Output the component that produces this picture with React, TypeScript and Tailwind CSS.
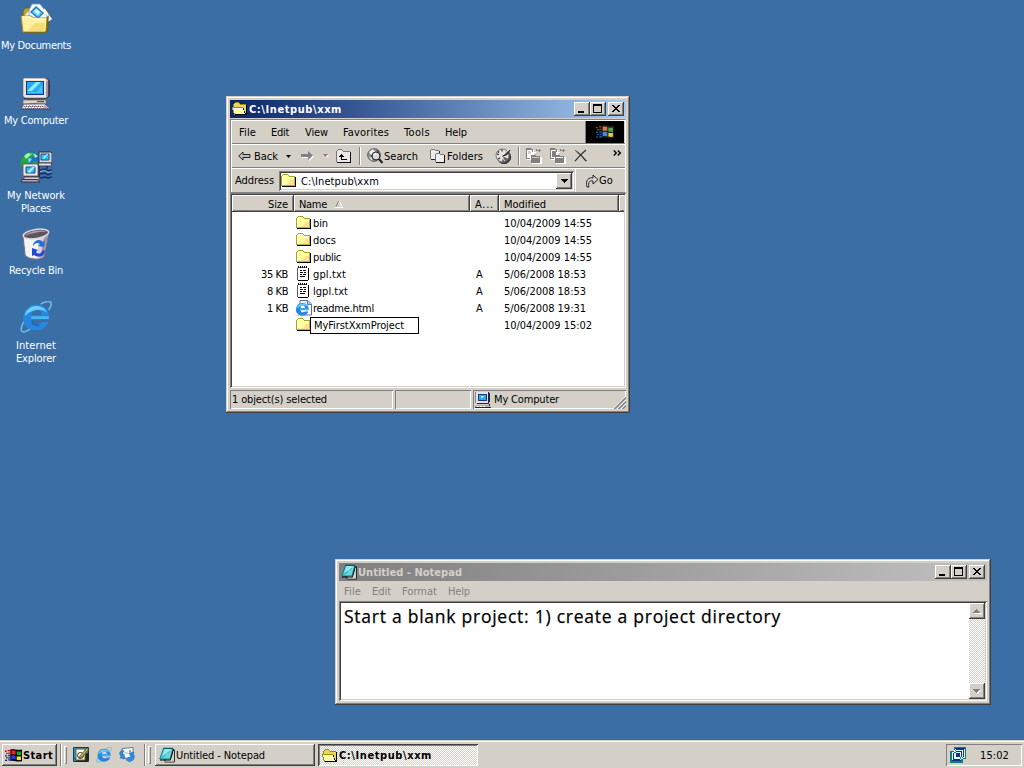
import { useLayoutEffect, useRef, useState } from "react";
import type { ReactNode } from "react";

const RAISED = "bg-[#d4d0c8] shadow-[inset_-1px_-1px_0_#404040,inset_1px_1px_0_#fff,inset_-2px_-2px_0_#808080]";
const SUNKEN = "shadow-[inset_1px_1px_0_#808080,inset_-1px_-1px_0_#fff,inset_2px_2px_0_#404040,inset_-2px_-2px_0_#d4d0c8]";
const THIN_SUNKEN = "shadow-[inset_1px_1px_0_#808080,inset_-1px_-1px_0_#fff]";
const FRAME =
  "bg-[#d4d0c8] shadow-[inset_-1px_-1px_0_#404040,inset_1px_1px_0_#d4d0c8,inset_-2px_-2px_0_#808080,inset_2px_2px_0_#fff]";
const DITHER = "bg-[repeating-conic-gradient(#d4d0c8_0_25%,#fff_0_50%)] bg-[length:2px_2px]";

/* Text whose letter spacing is adjusted so the line is exactly w pixels wide. */
function Fit({ w, children, className = "" }: { w: number; children: string; className?: string }) {
  const ref = useRef<HTMLSpanElement>(null);
  const [gap, setGap] = useState(0);
  useLayoutEffect(() => {
    if (ref.current) setGap((w - ref.current.getBoundingClientRect().width) / children.length);
  }, []);
  return (
    <span ref={ref} className={`inline-block shrink-0 whitespace-pre ${className}`} style={{ letterSpacing: gap }}>
      {children}
    </span>
  );
}

function Folder({ s = 16 }: { s?: number }) {
  return (
    <svg width={s} height={s} viewBox="0 0 16 16" className="shrink-0" shapeRendering="crispEdges">
      <path d="M1 3h1V2h5v1h1v1h6v9H1z" fill="#ffff9c" />
      <path d="M9 7h4v5H5v-1h2v-1h1V9h1z" fill="#ffdf94" />
      <path d="M0 3h1v10H0zM1 2h1v1H1zM2 1h5v1H2zM7 2h1v1H7zM8 3h6v1H8z" fill="#a5a229" />
      <path d="M1 4h1v8H1zM2 2h5v1H2zM7 4h6v1H7z" fill="#fff" />
      <path d="M14 4h1v10h-1zM1 13h14v1H1z" fill="#000" />
      <path d="M13 4h1v9h-1zM1 12h12v1H1z" fill="#b5b242" />
    </svg>
  );
}

function OpenFolder() {
  return (
    <svg width="16" height="16" viewBox="0 0 16 16" className="shrink-0" shapeRendering="crispEdges">
      <path d="M2 3h1V2h4v1h1v1h6v10H4V8H2z" fill="#e7d760" />
      <path d="M2 2h1V1h4v1h1v1h6v1H8V3H7V2H3v1H2v3H1V3h1z" fill="#949200" />
      <path d="M0 6h11v2h1v3h1v2h1v1H3v-2H2v-2H1V8H0z" fill="#ffffa5" />
      <path d="M1 7h9v1H2v2h1v2H2V9H1z" fill="#fff" />
      <path d="M0 6h11v1H0zM0 7h1v2H0zM1 9h1v3H1zM2 12h1v2H2z" fill="#949200" />
      <path d="M3 14h12V4h-1v8h-1v-2h-1V7h-1v2h1v3h1v1H3z" fill="#000" />
    </svg>
  );
}

function TxtFile() {
  return (
    <svg width="16" height="16" viewBox="0 0 16 16" className="shrink-0" shapeRendering="crispEdges">
      <path d="M2 2h10v12H2z" fill="#fff" />
      <path d="M1 2h1v12H1zM2 1h9v1H2z" fill="#606060" />
      <path d="M12 2h1v12h-1zM2 14h10v1H2zM2 0h1v2H2zM4 0h1v2H4zM6 0h1v2H6zM8 0h1v2H8zM10 0h1v2h-1zM4 4h2v1H4zM7 4h3v1H7zM4 6h3v1H4zM8 6h2v1H8zM4 8h2v1H4zM7 8h3v1H7zM4 10h5v1H4z" fill="#000" />
    </svg>
  );
}

function IELogo({ size, page = false }: { size: number; page?: boolean }) {
  return (
    <svg width={size} height={size} viewBox={page ? "0 0 32 32" : "1 1.5 31 31"} className="shrink-0">
      {page && <path d="M8 1h16l7 7v22H8z" fill="#fff" stroke="#5a6ea5" strokeWidth="2" />}
      {page && <path d="M23 1v8h8" fill="#bdd0f0" stroke="#5a6ea5" strokeWidth="2" />}
      <g transform={page ? "translate(-4 1)" : undefined}>
        <path d="M21 4.500C26 1.500 30 1 31 3.200c.9 1.900-.6 4.600-2.300 7.200M6.500 19C2 25 1.400 30 3.100 31c2 .9 6-.8 9-3.400" fill="none" stroke="#68b7e9" strokeWidth="1.600" />
        <path d="M29.400 19.400H12.200c.2 3.100 2.100 4.900 4.800 4.900 2.200 0 3.700-.8 4.800-2.400h7c-1.800 4.900-6.300 8-12.200 8C9 29.900 4 25.500 4 18.200 4 10.600 9.500 5 16.700 5c7.800 0 13.300 5.800 12.700 14.400zM22.300 15c-.3-3.200-2.200-4.900-5.100-4.900-2.700 0-4.700 1.700-5.100 4.900z" fill="#2687df" />
        <path d="M5.500 16.500C6.200 10.500 11 6.400 16.600 6.300c5 0 9 2.300 10.600 6.500-5.200-4.500-15-3.700-21.700 3.700z" fill="#6ed0fa" />
        <path d="M12.500 21c.7 3 3.600 4.700 7 3.700" fill="none" stroke="#1863b8" strokeWidth="1.500" />
        <path d="M12 16.200h16.800c.2 1.200.1 2-.1 2.700H12z" fill="#49b3f3" />
      </g>
    </svg>
  );
}

function Computer() {
  return (
    <svg width="32" height="32" viewBox="0 0 32 32" className="shrink-0">
      <path d="M4 0h23l3 3v15l-4 3H4z" fill="#39334f" />
      <path d="M3 1l1-1h21l3 2v16l-2 2H5l-2-2z" fill="#e7e3de" stroke="#6a6478" strokeWidth=".6" />
      <path d="M4 1.500h21" stroke="#fff" />
      <path d="M26 2.500l2 1V18l-2 1z" fill="#9b94a8" />
      <path d="M6 3h18v14H6z" fill="#17378c" />
      <path d="M7 4h16v12H7z" fill="#29a8ee" />
      <path d="M8 12l8-8h5l-9 9H8z" fill="#82effb" />
      <path d="M8 14h9l5-7v8H8z" fill="#41c6f7" />
      <path d="M8 20h16v2H8z" fill="#4f4858" />
      <path d="M3 22h23v5H3z" fill="#ddd7cd" stroke="#625b5c" strokeWidth=".7" />
      <path d="M17 23.500h7" stroke="#505070" />
      <path d="M3 26l21-1 7 6H1z" fill="#b6aebe" stroke="#41394c" strokeWidth=".7" />
      <path d="M4 27.500h20M3 29.500h21" stroke="#fff" strokeDasharray="2 1" />
      <path d="M4 28.500h20M3 30.500h27" stroke="#645c6d" strokeDasharray="1 1" />
    </svg>
  );
}

function SmallComputer() {
  return (
    <svg width="16" height="16" viewBox="0 0 16 16" className="shrink-0" shapeRendering="crispEdges">
      <path d="M1 0h12v11H1z" fill="#e7e3de" />
      <path d="M0 0h1v11H0z" fill="#8c8494" />
      <path d="M13 0h1v1h1v9h-1v1h-1zM2 11h12v1H2z" fill="#29233c" />
      <path d="M3 2h9v7H3z" fill="#17378c" />
      <path d="M4 3h7v5H4z" fill="#29a8ee" />
      <path d="M6 4h3v1H8v1H6z" fill="#adf5ff" />
      <path d="M2 12h12v2H2z" fill="#d0cabf" />
      <path d="M1 13h13v1h1v1H0v-1h1z" fill="#b6aebe" />
      <path d="M0 15h16v1H0zM14 12h1v2h-1z" fill="#29233c" />
      <path d="M2 14h2v1H2zM5 14h2v1H5zM8 14h2v1H8z" fill="#fff" />
    </svg>
  );
}

function Documents() {
  return (
    <svg width="32" height="32" viewBox="0 0 32 32">
      <path d="M3 8l2-3h7l2 3h14v19H3z" fill="#b9a531" stroke="#696618" />
      <path d="M4 14L15 1l16 14-9 8z" fill="#eef8ff" stroke="#fff" />
      <path d="M12 1h8l7 9v10H9V7z" fill="#f7fbff" stroke="#6996c0" strokeWidth=".8" />
      <path d="M10 9l6-6 8 7-6 6z" fill="#3474ba" />
      <path d="M12 9l4-4 6 5-4 4z" fill="#53d8f4" />
      <path d="M14 8l3-2 3 3-2 3z" fill="#cbffff" />
      <path d="M24 6l7 10-3 2" fill="none" stroke="#fff" strokeWidth="1.500" />
      <path d="M1 13h10l3 2h13l-1 14H3z" fill="#ffefa0" stroke="#a58c18" />
      <path d="M2 14h8l3 2h13" fill="none" stroke="#fffbdc" strokeWidth="1.400" />
      <path d="M27 15l1-1-1 14-2 2H4" fill="none" stroke="#756513" strokeWidth="1.500" />
      <path d="M15 20h10l-1 8H8z" fill="#f5dc79" />
    </svg>
  );
}

function Network() {
  return (
    <svg width="32" height="32" viewBox="0 0 32 32">
      <circle cx="11" cy="11" r="10.500" fill="#1d6fc6" />
      <path d="M1 8l5-6 6-1 3 3-5 4-1 6-5 3-4-3zM12 12l4-2 3 4-4 7-5-2z" fill="#25a444" />
      <path d="M4 5l4-3 4 1-6 5zM13 2l5 3-3 2z" fill="#a8efaf" />
      <path d="M8 7l4 1-3 4z" fill="#6fdfff" />
      <path d="M19 1h12l1 1v10H19z" fill="#ddd8d2" stroke="#28243f" />
      <path d="M21 3h8v6h-8z" fill="#24c5f5" stroke="#164a9a" />
      <path d="M23 7l4-4h1l-4 5z" fill="#c5ffff" />
      <path d="M19 12h12l1 3H18z" fill="#e6e0da" stroke="#44405a" />
      <path d="M4 14h14l2 1v11H4z" fill="#38334c" />
      <path d="M3 13h14l1 1v11H3z" fill="#eee8e1" stroke="#54506a" strokeWidth=".8" />
      <path d="M6 16h9v6H6z" fill="#28baf2" stroke="#174396" />
      <path d="M7 21l5-5h3l-5 6z" fill="#9af5ff" />
      <path d="M4 26h15v3H4z" fill="#d8d1ca" stroke="#544b58" />
      <path d="M2 28.500h15l3 2.500H1z" fill="#b4abb6" stroke="#383043" />
      <path d="M20 19l5-1 3 2 4-1M20 23l5-1 3 2 4-2M20 27l5-1 3 1 4-1M27 15v3" fill="none" stroke="#102e63" strokeWidth="1.400" />
      <path d="M20 20.500l5-1 3 2 4-1" fill="none" stroke="#79b5e6" />
    </svg>
  );
}

function RecycleBin() {
  return (
    <svg width="32" height="32" viewBox="0 0 32 32">
      <path d="M3 8l2 19c2 4 14 6 19 2l5-25z" fill="#d7d3dd" stroke="#786d83" />
      <path d="M4 9l2 18c3 3 8 3 12 3V11z" fill="#f5f3f3" />
      <path d="M24 10l4-4-4 22-4 2z" fill="#9e95ab" />
      <ellipse cx="16" cy="6" rx="12.800" ry="4.500" transform="rotate(-9 16 6)" fill="#5c545f" stroke="#ddd5e3" strokeWidth="1.500" />
      <path d="M5 8c4-5 15-7 22-4-6-1-15 1-22 4z" fill="#a79da8" />
      <path d="M13 18c0-6 7-8 10-4l2-2-1 7-6-1 2-2c-3-2-5-1-7 2z" fill="#286ed8" />
      <path d="M12 20l6 2-2 2c3 3 6 1 7-2l2 1c-1 6-7 7-11 4l-2 1z" fill="#2448d6" />
    </svg>
  );
}

function NotepadIcon() {
  return (
    <svg width="16" height="16" viewBox="0 0 16 16" className="shrink-0">
      <path d="M6 3h9.500v12H6z" fill="#fff" stroke="#000" strokeWidth=".8" />
      <path d="M14 5v9H6" fill="none" stroke="#a8a888" />
      <path d="M4.500 1.500h9.500L11 12H.8z" fill="#64d8e0" stroke="#087a82" />
      <path d="M5.500 3h6M5 5h5M4 7h5" stroke="#c4ffff" />
      <path d="M4 10l7-6M2 11l5-4" stroke="#37aebb" />
      <path d="M5 .5v1.500M7 .5v1.500M9 .5v1.500M11 .5v1.500M13 .5v1.500" stroke="#222" strokeWidth=".8" />
      <path d="M1 13h10.500l3-11" fill="none" stroke="#000" />
    </svg>
  );
}

function Flag({ glow = false, s = 16 }: { glow?: boolean; s?: number }) {
  return (
    <svg width={s} height={s} viewBox="0 0 16 16" className="shrink-0">
      <path d="M5 2.400c3-1.700 5 .9 11 0v11c-5 1.300-8-1.600-11 0z" fill={glow ? "#182018" : "#000"} />
      <path d="M6 3.500c1.600-.7 2.700-.3 4 .1v3.600c-1.500-.5-2.500-.8-4 0z" fill={glow ? "#e47851" : "#f02020"} />
      <path d="M11 4c1.400.4 2.700.4 4 .1v3.600c-1.400.2-2.700.1-4-.2z" fill={glow ? "#48a84b" : "#13ad20"} />
      <path d="M6 8.200c1.600-.7 2.700-.3 4 .1v3.600c-1.500-.5-2.500-.8-4 0z" fill={glow ? "#5288db" : "#2040e8"} />
      <path d="M11 8.600c1.400.4 2.700.4 4 .1v3.600c-1.400.2-2.700.1-4-.2z" fill={glow ? "#f0cb35" : "#f9e420"} />
      <path d="M0 4h1.500M2.500 3.500H5M1 6h1.500M3 5.700h2" stroke={glow ? "#a4442e" : "#c00"} strokeWidth="1.200" />
      <path d="M0 8.300h2M3 8h2M1 10.300h1.500M3 10.200h2M0 12.500h2M3 12.200h2" stroke={glow ? "#305da6" : "#111c80"} strokeWidth="1.200" />
    </svg>
  );
}

function DesktopIcon({ icon, lines }: { icon: ReactNode; lines: [string, number][] }) {
  return (
    <div className="flex h-[75px] w-[72px] flex-col items-center text-white">
      <div className="h-[36px]">{icon}</div>
      {lines.map(([t, w]) => (
        <Fit key={t} w={w} className="h-[13px]">{t}</Fit>
      ))}
    </div>
  );
}

function CaptionButton({ kind }: { kind: "min" | "max" | "close" }) {
  return (
    <div className={`h-[14px] w-4 ${RAISED} ${kind === "close" ? "ml-[2px]" : ""}`}>
      <svg width="16" height="14" viewBox="0 0 16 14" shapeRendering="crispEdges">
        {kind === "min" && <path d="M4 9h6v2H4z" />}
        {kind === "max" && <path fillRule="evenodd" d="M3 2h9v9H3zM4 4v6h7V4z" />}
        {kind === "close" && (
          <path d="M4 3h2v1h1v1h2V4h1V3h2v1h-1v1h-1v1H9v1h1v1h1v1h1v1h-2V9H9V8H7v1H6v1H4V9h1V8h1V7h1V6H6V5H5V4H4z" />
        )}
      </svg>
    </div>
  );
}

function TitleBar({ icon, title, w, active }: { icon: ReactNode; title: string; w: number; active: boolean }) {
  return (
    <div
      className={`flex h-[18px] shrink-0 items-center pr-[2px] pl-[2px] font-bold ${
        active
          ? "bg-linear-to-r from-[#0a246a] to-[#a6caf0] text-white"
          : "bg-linear-to-r from-[#808080] to-[#c0c0c0] text-[#d4d0c8]"
      }`}
    >
      {icon}
      <Fit w={w} className="ml-px">{title}</Fit>
      <div className="ml-auto flex text-black">
        <CaptionButton kind="min" />
        <CaptionButton kind="max" />
        <CaptionButton kind="close" />
      </div>
    </div>
  );
}

function MoveCopy({ copy = false }: { copy?: boolean }) {
  return (
    <svg width="18" height="16" viewBox="0 0 18 16" shapeRendering="crispEdges" className="shrink-0">
      <path d="M2 1h4l1 1h2v2h2v1H9v3h5l1 1h2v7H7v-4H2z" fill="#fff" />
      <path d="M1 0h4l1 1h2v3H7V2H2v8h3v1H1zM6 7h4l1 1h4v7H6zM11 1h1v1h2V1h1v1h1v1h-1v1h-1V3h-3z" fill="#808080" />
      {copy ? <path d="M3 3h4v6H3zM9 10h4v3H9z" fill="#808080" /> : <path d="M3 3h3v3H3zM7 9h7v1H7z" fill="#d4d0c8" />}
      {copy && <path d="M7 9h7v1H7z" fill="#fff" />}
    </svg>
  );
}

function Separator() {
  return <div className="h-[18px] w-[2px] shrink-0 border-l border-[#808080] bg-white" />;
}

function Toolbar() {
  return (
    <div className="flex h-[22px] items-center">
      <svg width="13" height="12" viewBox="0 0 13 12" className="ml-[6px]">
        <path d="M.7 6L5 2v2.500h7v3H5V10z" fill="#bcbcbc" stroke="#222" />
      </svg>
      <Fit w={24} className="ml-[3px]">Back</Fit>
      <svg width="5" height="3" viewBox="0 0 5 3" className="ml-[8px]"><path d="M0 0h5L2.500 3z" /></svg>
      <svg width="14" height="12" viewBox="0 0 14 12" className="ml-[10px]">
        <path d="M1 5h7V2l5 4.500L8 11V8H1z" fill="#fff" />
        <path d="M0 4h7V1l5 4.500L7 10V7H0z" fill="#808080" />
      </svg>
      <svg width="6" height="4" viewBox="0 0 6 4" className="ml-[8px]">
        <path d="M1 1h5L3.500 4z" fill="#fff" /><path d="M0 0h5L2.500 3z" fill="#808080" />
      </svg>
      <svg width="16" height="16" viewBox="0 0 16 16" className="ml-[7px]" shapeRendering="crispEdges">
        <path d="M1 3h1V2h4v1h1v1h7v10H1z" fill="#e8e8e8" />
        <path d="M0 3h1v11H0zM1 2h1v1H1zM2 1h4v1H2zM6 2h1v1H6zM7 3h7v1H7z" fill="#777" />
        <path d="M14 4h1v11H1v-1h13z" fill="#111" />
        <path d="M5 6h1v1h1v1h1v1H6v2h5v1H5V9H3V8h1V7h1z" />
      </svg>
      <div className="mr-[6px] ml-[7px]"><Separator /></div>
      <svg width="17" height="16" viewBox="0 0 17 16">
        <circle cx="7" cy="7" r="6.300" fill="#999" stroke="#555" />
        <path d="M2 4l4-3 2 3-4 3zM2 9l3 1v3z" fill="#eee" />
        <path d="M9 1l3 2-1 2zM3 7h2v2z" fill="#444" />
        <circle cx="9" cy="8" r="4" fill="#e5e5e5" fillOpacity=".85" stroke="#222" />
        <path d="M7 7l2-2" stroke="#fff" strokeWidth="1.500" />
        <path d="M12 11l3.500 4" stroke="#222" strokeWidth="2" />
      </svg>
      <Fit w={34} className="ml-0">Search</Fit>
      <svg width="16" height="15" viewBox="0 0 16 15" className="ml-[12px]" shapeRendering="crispEdges">
        <path d="M1 1h4v1h4v8H1z" fill="#ececec" />
        <path d="M0 1h1v9H0zM1 0h4v1H1zM5 1h4v1H5z" fill="#777" /><path d="M9 2h1v9H1v-1h8z" fill="#222" />
        <path d="M6 5h4v1h4v7H6z" fill="#ececec" />
        <path d="M5 5h1v8H5zM6 4h4v1H6zM10 5h4v1h-4z" fill="#777" /><path d="M14 6h1v8H6v-1h8z" fill="#111" />
      </svg>
      <Fit w={36} className="ml-px">Folders</Fit>
      <svg width="17" height="16" viewBox="0 0 17 16" className="ml-[12px]">
        <circle cx="9" cy="9" r="6.700" fill="#444" stroke="#333" />
        <circle cx="7.500" cy="7.500" r="6.500" fill="#e4e4e4" stroke="#777" />
        <path d="M7.500 8L12 2l2.500 4zM7.500 8l6 3-3 3z" fill="#666" />
        <path d="M7 8l4-1 4-5M2 6l2 .5M7 1.500v2M3 11l2-1M8 13.500v-2M3 3.500l1 1" fill="none" stroke="#222" strokeWidth="1.200" />
        <path d="M7.500 7.500l6.500-6" stroke="#fff" />
      </svg>
      <div className="mr-[5px] ml-[6px]"><Separator /></div>
      <MoveCopy />
      <div className="ml-[6px] flex"><MoveCopy copy /></div>
      <svg width="14" height="14" viewBox="0 0 14 14" className="ml-[7px]">
        <path d="M2 2c3 2 7 6 10 10M12 1C8 4 5 8 1 12" fill="none" stroke="#333" strokeWidth="1.300" />
        <path d="M1 1l3 3M11 10l2 2" stroke="#666" />
      </svg>
      <svg width="9" height="6" viewBox="0 0 9 6" className="mt-[-7px] mr-[3px] ml-auto">
        <path d="M.8.5L3.300 3 .8 5.500M4.800.5L7.300 3 4.800 5.500" fill="none" stroke="#000" strokeWidth="1.400" />
      </svg>
    </div>
  );
}

const files: { size?: string; sw?: number; name: string; w: number; kind: "dir" | "txt" | "html"; attr?: string; date: string; dw: number }[] = [
  { name: "bin", w: 15, kind: "dir", date: "10/04/2009 14:55", dw: 88 },
  { name: "docs", w: 23, kind: "dir", date: "10/04/2009 14:55", dw: 88 },
  { name: "public", w: 28, kind: "dir", date: "10/04/2009 14:55", dw: 88 },
  { size: "35 KB", sw: 27, name: "gpl.txt", w: 33, kind: "txt", attr: "A", date: "5/06/2008 18:53", dw: 82 },
  { size: "8 KB", sw: 21, name: "lgpl.txt", w: 35, kind: "txt", attr: "A", date: "5/06/2008 18:53", dw: 82 },
  { size: "1 KB", sw: 21, name: "readme.html", w: 61, kind: "html", attr: "A", date: "5/06/2008 19:31", dw: 82 },
  { name: "MyFirstXxmProject", w: 90, kind: "dir", date: "10/04/2009 15:02", dw: 88 },
];

function FileList() {
  const head = `flex h-[17px] items-center pt-px ${RAISED}`;
  return (
    <div className={`h-[196px] bg-white p-[2px] ${SUNKEN}`}>
      <div className="flex">
        <div className={`${head} w-[62px] justify-end pr-[6px]`}><Fit w={20}>Size</Fit></div>
        <div className={`${head} w-[176px] pl-[5px]`}>
          <Fit w={28}>Name</Fit>
          <svg width="9" height="8" viewBox="0 0 9 8" className="ml-[8px]">
            <path d="M.5 7.500L4 .5" stroke="#808080" /><path d="M4 .5l3.500 7H0" fill="none" stroke="#fff" />
          </svg>
        </div>
        <div className={`${head} w-[29px] pl-[5px]`}><Fit w={19}>A...</Fit></div>
        <div className={`${head} w-[120px] pl-[5px]`}><Fit w={42}>Modified</Fit></div>
        <div className="h-[17px] flex-1 bg-[#d4d0c8] shadow-[inset_0_-1px_0_#404040,inset_1px_1px_0_#fff,inset_0_-2px_0_#808080]" />
      </div>
      <div className="pt-[3px]">
        {files.map((f, i) => (
          <div key={f.name} className="flex h-[17px] items-center">
            <div className="flex w-[56px] justify-end">{f.size && <Fit w={f.sw!}>{f.size}</Fit>}</div>
            <div className="ml-[8px] flex w-[179px] items-center">
              <div className="flex h-[17px] items-start">
                {f.kind === "dir" ? <Folder /> : f.kind === "txt" ? <TxtFile /> : <IELogo size={16} page />}
              </div>
              {i === 6 ? (
                <div className="-ml-[2px] flex h-[17px] w-[109px] items-center border border-black bg-white pl-[3px]">
                  <Fit w={f.w}>{f.name}</Fit>
                </div>
              ) : (
                <Fit w={f.w} className="ml-px">{f.name}</Fit>
              )}
            </div>
            <div className="w-[29px] pl-px">{f.attr && <Fit w={7}>A</Fit>}</div>
            <Fit w={f.dw}>{f.date}</Fit>
          </div>
        ))}
      </div>
    </div>
  );
}

function Explorer() {
  const menu: [string, number, string][] = [
    ["File", 17, "ml-[7px]"], ["Edit", 18, "ml-[15px]"], ["View", 23, "ml-[16px]"],
    ["Favorites", 46, "ml-[15px]"], ["Tools", 26, "ml-[15px]"], ["Help", 22, "ml-[15px]"],
  ];
  return (
    <div className={`absolute top-[96px] left-[226px] flex h-[317px] w-[404px] flex-col p-1 ${FRAME}`}>
      <TitleBar icon={<OpenFolder />} title="C:\Inetpub\xxm" w={93} active />
      <div className="mt-px border border-[#808080] border-r-white">
        <div className="flex flex-col border-t border-l border-white">
          <div className="flex h-[22px] items-center">
            {menu.map(([t, w, m]) => <Fit key={t} w={w} className={m}>{t}</Fit>)}
            <div className="mr-px ml-auto flex h-full w-[39px] items-center justify-center border-l border-[#808080] bg-black"><Flag glow s={18} /></div>
          </div>
          <div className="border-t border-b border-t-[#808080] border-b-white" />
          <Toolbar />
          <div className="border-t border-b border-t-[#808080] border-b-white" />
          <div className="flex h-[23px] items-center">
            <Fit w={39} className="ml-[3px]">Address</Fit>
            <div className={`ml-[5px] flex h-5 w-[295px] items-center bg-white p-[2px] ${SUNKEN}`}>
              <Folder />
              <Fit w={78} className="ml-[4px] pt-px">C:\Inetpub\xxm</Fit>
              <div className={`ml-auto flex h-4 w-4 items-center justify-center ${RAISED}`}>
                <svg width="7" height="4" viewBox="0 0 7 4" shapeRendering="crispEdges"><path d="M0 0h7v1H0zM1 1h5v1H1zM2 2h3v1H2zM3 3h1v1H3z" /></svg>
              </div>
            </div>
            <div className="ml-px h-full w-px bg-white" />
            <svg width="14" height="14" viewBox="0 0 14 14" className="ml-[9px]">
              <path d="M2 13C0 6 4 3 8 4V1l5 4.500L8 10V7C4 6 3 9 4 13z" fill="#d5d5d5" stroke="#222" />
            </svg>
            <Fit w={14}>Go</Fit>
          </div>
        </div>
      </div>
      <FileList />
      <div className="mt-[2px] flex h-[19px] gap-[2px]">
        <div className={`flex w-[163px] items-center pl-[2px] ${THIN_SUNKEN}`}><Fit w={95}>1 object(s) selected</Fit></div>
        <div className={`w-[76px] ${THIN_SUNKEN}`} />
        <div className={`flex flex-1 items-center pl-[2px] ${THIN_SUNKEN}`}>
          <SmallComputer />
          <Fit w={65} className="ml-[3px]">My Computer</Fit>
          <svg width="13" height="13" viewBox="0 0 13 13" className="mt-auto ml-auto">
            <path d="M0 13L13 0v13z" fill="#d4d0c8" />
            <path d="M0 13L13 0M4 13l9-9M8 13l5-5" stroke="#fff" />
            <path d="M1.500 13L13 1.500M5.500 13L13 5.500M9.500 13L13 9.500" stroke="#808080" strokeWidth="1.500" />
          </svg>
        </div>
      </div>
    </div>
  );
}

function ScrollButton({ up = false }: { up?: boolean }) {
  return (
    <div className={`h-4 w-4 ${RAISED}`}>
      <svg width="16" height="16" viewBox="0 0 16 16" shapeRendering="crispEdges">
        {up ? (
          <>
            <path d="M5 10h8v1H5z" fill="#fff" /><path d="M7 6h1v1h1v1h1v1h1v1H4V9h1V8h1V7h1z" fill="#808080" />
          </>
        ) : (
          <>
            <path d="M5 7h7v1h-1v1h-1v1H9v1H8v-1h1z" fill="#fff" /><path d="M4 6h7v1h-1v1H9v1H8v1H7V9H6V8H5V7H4z" fill="#808080" />
          </>
        )}
      </svg>
    </div>
  );
}

function Notepad() {
  return (
    <div className={`absolute top-[559px] left-[335px] flex h-[146px] w-[656px] flex-col p-1 ${FRAME}`}>
      <TitleBar icon={<NotepadIcon />} title="Untitled - Notepad" w={104} active={false} />
      <div className="flex h-5 items-center pl-[5px] text-[#808080]">
        <Fit w={17}>File</Fit>
        <Fit w={19} className="ml-[11px]">Edit</Fit>
        <Fit w={35} className="ml-[11px]">Format</Fit>
        <Fit w={22} className="ml-[11px]">Help</Fit>
      </div>
      <div className={`flex flex-1 bg-white p-[2px] ${SUNKEN}`}>
        <Fit w={437} className="mt-[2px] ml-[3px] font-['Open_Sans',sans-serif] text-[17.500px] leading-[22px] [-webkit-text-stroke:0.25px_#000]">
          Start a blank project: 1) create a project directory
        </Fit>
        <div className={`ml-auto flex w-4 flex-col justify-between ${DITHER}`}>
          <ScrollButton up />
          <ScrollButton />
        </div>
      </div>
    </div>
  );
}

function Grip() {
  return (
    <div className="flex items-center gap-[2px]">
      <div className="h-[22px] w-[2px] border-l border-[#808080] bg-white" />
      <div className="h-[18px] w-[3px] bg-[#d4d0c8] shadow-[inset_1px_1px_0_#fff,inset_-1px_-1px_0_#808080]" />
    </div>
  );
}

function Taskbar() {
  return (
    <div className="flex h-7 shrink-0 items-center border-t border-[#d4d0c8] bg-[#d4d0c8] pt-px pr-[2px] pl-[2px] shadow-[inset_0_1px_0_#fff]">
      <div className={`flex h-[22px] w-[55px] items-center pl-[3px] font-bold ${RAISED}`}>
        <Flag s={17} />
        <Fit w={30} className="ml-px">Start</Fit>
      </div>
      <div className="ml-[3px]"><Grip /></div>
      <svg width="17" height="16" viewBox="0 0 17 16" className="ml-[6px]">
        <path d="M.5.5h15v14H.5z" fill="#2a94c8" stroke="#143b5a" />
        <path d="M1 11l3 4h10l2-3V5l-3 2-6 6z" fill="#242414" />
        <path d="M3 2h9v11H3z" fill="#fffbe0" stroke="#6b6242" />
        <circle cx="7.500" cy="8.500" r="3" fill="#fff" stroke="#333" />
        <path d="M7 9l7-8 2 1-7 8-3 1z" fill="#e8b02e" stroke="#332" strokeWidth=".7" />
      </svg>
      <div className="ml-[6px] flex"><IELogo size={16} /></div>
      <svg width="16" height="16" viewBox="0 0 16 16" className="ml-[7px]">
        <path d="M3 1.500L14 .5v9L4 12z" fill="#f5fbff" stroke="#5a7da8" />
        <path d="M10 3l2 0v2h-2z" fill="#ef8a46" />
        <path d="M5 6h4" stroke="#9eb6ce" />
        <path d="M4 3C0 4 0 8 2 9L1 11l5 .5L5 7 4 8C2 7 3 5 5 5zM12 14c4-1 4-6 2-7l1-2-5 1 2 4 1-1c1 1 0 2-2 2l-1-1-3 3 4 2z" fill="#2f91e5" stroke="#145baa" strokeWidth=".5" />
      </svg>
      <div className="ml-[9px]"><Grip /></div>
      <div className={`ml-[4px] flex h-[22px] w-[160px] items-center pl-[4px] ${RAISED}`}>
        <NotepadIcon />
        <Fit w={89} className="ml-px">Untitled - Notepad</Fit>
      </div>
      <div className={`ml-[3px] flex h-[22px] w-[160px] items-center pt-px pl-[4px] font-bold shadow-[inset_1px_1px_0_#404040,inset_-1px_-1px_0_#fff,inset_2px_2px_0_#808080] ${DITHER}`}>
        <OpenFolder />
        <Fit w={93} className="ml-px">C:\Inetpub\xxm</Fit>
      </div>
      <div className={`ml-auto flex h-[22px] w-[76px] items-center pl-[4px] ${THIN_SUNKEN}`}>
        <svg width="16" height="16" viewBox="0 0 16 16" shapeRendering="crispEdges">
          <path d="M4 0h12v12h-3v4H0V4h4z" fill="#087f86" />
          <path d="M6 2h8v8H6z" fill="#10337c" />
          <path d="M2 6h8v8H2z" fill="#10337c" />
          <path fillRule="evenodd" d="M5 1h10v10H5zM6 2v8h8V2zM2 5h9v9H2zM3 6v7h7V6zM4 3h9v9H4zM5 4v7h7V4z" fill="#e6f4ff" />
          <path d="M5 1h10v1H5zM2 13h9v1H2z" fill="#10337c" />
        </svg>
        <Fit w={29} className="ml-[14px]">15:02</Fit>
      </div>
    </div>
  );
}

export default function App() {
  return (
    <div className="relative flex h-[768px] w-[1024px] flex-col overflow-hidden bg-[#3a6ea5] font-['DejaVu_Sans_Condensed','DejaVu_Sans',sans-serif] text-[11px] leading-[13px] text-black">
      <div className="flex flex-1 flex-col pt-[3px]">
        <DesktopIcon icon={<Documents />} lines={[["My Documents", 70]]} />
        <DesktopIcon icon={<Computer />} lines={[["My Computer", 64]]} />
        <DesktopIcon icon={<div className="-mt-[2px]"><Network /></div>} lines={[["My Network", 58], ["Places", 30]]} />
        <DesktopIcon icon={<RecycleBin />} lines={[["Recycle Bin", 54]]} />
        <DesktopIcon icon={<div className="-mt-[2px]"><IELogo size={32} /></div>} lines={[["Internet", 40], ["Explorer", 40]]} />
      </div>
      <Explorer />
      <Notepad />
      <Taskbar />
    </div>
  );
}
